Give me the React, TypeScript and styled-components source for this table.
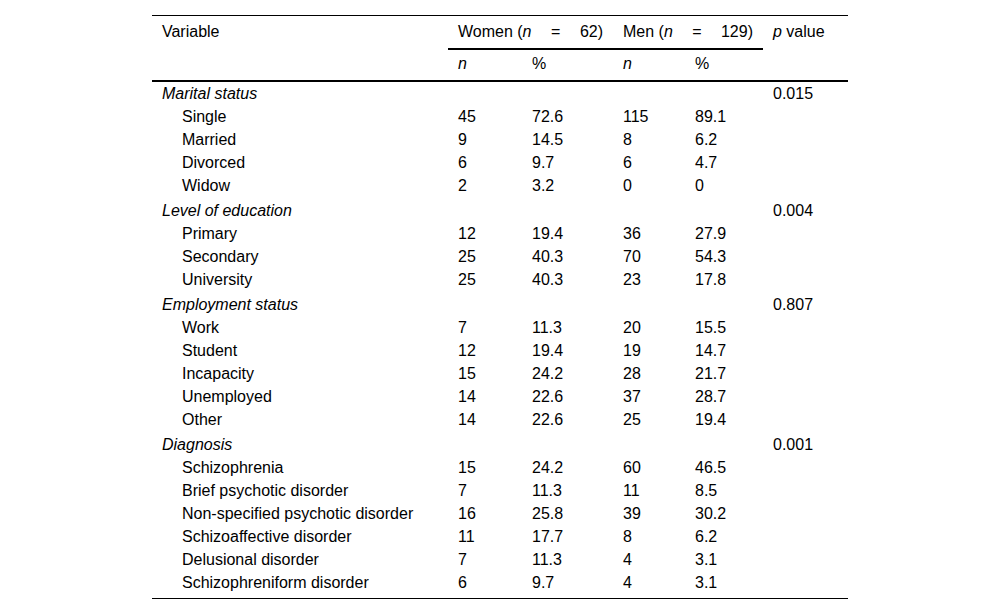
import React from "react";
import styled, { createGlobalStyle } from "styled-components";

const Global = createGlobalStyle`
  html, body { margin: 0; padding: 0; background: #fff; }
  body { font-family: "Liberation Sans", Arial, sans-serif; color: #000; }
`;

const Page = styled.div`
  width: 1000px;
  padding-top: 15px;
  display: flex;
  justify-content: center;
`;

const Table = styled.table`
  width: 696px;
  border-collapse: collapse;
  table-layout: fixed;
  font-size: 16px;
  line-height: 17px;
  border-top: 1px solid #000;
  border-bottom: 1px solid #000;
`;

const HeadCell = styled.th<{ $row2?: boolean; $underline?: boolean }>`
  text-align: left;
  font-weight: normal;
  vertical-align: top;
  white-space: nowrap;
  padding: ${(p) => (p.$row2 ? "5px 10px 8px 10px" : "7px 10px 8px 10px")};
  border-bottom: ${(p) => (p.$underline ? "2px solid #000" : "none")};
`;

const HeadRow = styled.tr<{ $last?: boolean }>`
  border-bottom: ${(p) => (p.$last ? "2px solid #000" : "none")};
`;

const Equation = styled.span`
  display: flex;
  justify-content: space-between;
`;

const Ital = styled.i`
  font-style: italic;
`;

const Cell = styled.td<{ $indent?: boolean; $spaced?: boolean; $italic?: boolean; $last?: boolean }>`
  padding: ${(p) =>
    `${p.$spaced ? 5 : 3}px 10px ${p.$last ? 7 : 3}px ${p.$indent ? 30 : 10}px`};
  font-style: ${(p) => (p.$italic ? "italic" : "normal")};
  vertical-align: top;
  white-space: nowrap;
`;

type Item = { label: string; wn: string; wp: string; mn: string; mp: string };
type Section = { title: string; p: string; items: Item[] };

const it = (label: string, wn: string, wp: string, mn: string, mp: string): Item => ({
  label,
  wn,
  wp,
  mn,
  mp,
});

const sections: Section[] = [
  {
    title: "Marital status",
    p: "0.015",
    items: [
      it("Single", "45", "72.6", "115", "89.1"),
      it("Married", "9", "14.5", "8", "6.2"),
      it("Divorced", "6", "9.7", "6", "4.7"),
      it("Widow", "2", "3.2", "0", "0"),
    ],
  },
  {
    title: "Level of education",
    p: "0.004",
    items: [
      it("Primary", "12", "19.4", "36", "27.9"),
      it("Secondary", "25", "40.3", "70", "54.3"),
      it("University", "25", "40.3", "23", "17.8"),
    ],
  },
  {
    title: "Employment status",
    p: "0.807",
    items: [
      it("Work", "7", "11.3", "20", "15.5"),
      it("Student", "12", "19.4", "19", "14.7"),
      it("Incapacity", "15", "24.2", "28", "21.7"),
      it("Unemployed", "14", "22.6", "37", "28.7"),
      it("Other", "14", "22.6", "25", "19.4"),
    ],
  },
  {
    title: "Diagnosis",
    p: "0.001",
    items: [
      it("Schizophrenia", "15", "24.2", "60", "46.5"),
      it("Brief psychotic disorder", "7", "11.3", "11", "8.5"),
      it("Non-specified psychotic disorder", "16", "25.8", "39", "30.2"),
      it("Schizoaffective disorder", "11", "17.7", "8", "6.2"),
      it("Delusional disorder", "7", "11.3", "4", "3.1"),
      it("Schizophreniform disorder", "6", "9.7", "4", "3.1"),
    ],
  },
];

export default function App() {
  return (
    <>
      <Global />
      <Page>
        <Table>
          <colgroup>
            <col style={{ width: 296 }} />
            <col style={{ width: 74 }} />
            <col style={{ width: 91 }} />
            <col style={{ width: 72 }} />
            <col style={{ width: 78 }} />
            <col style={{ width: 85 }} />
          </colgroup>
          <thead>
            <HeadRow>
              <HeadCell rowSpan={2}>Variable</HeadCell>
              <HeadCell colSpan={2} $underline>
                <Equation>
                  <span>
                    Women (<Ital>n</Ital>
                  </span>
                  <span>=</span>
                  <span>62)</span>
                </Equation>
              </HeadCell>
              <HeadCell colSpan={2} $underline>
                <Equation>
                  <span>
                    Men (<Ital>n</Ital>
                  </span>
                  <span>=</span>
                  <span>129)</span>
                </Equation>
              </HeadCell>
              <HeadCell rowSpan={2}>
                <Ital>p</Ital> value
              </HeadCell>
            </HeadRow>
            <HeadRow $last>
              <HeadCell $row2>
                <Ital>n</Ital>
              </HeadCell>
              <HeadCell $row2>%</HeadCell>
              <HeadCell $row2>
                <Ital>n</Ital>
              </HeadCell>
              <HeadCell $row2>%</HeadCell>
            </HeadRow>
          </thead>
          <tbody>
            {sections.map((s, si) => {
              const spaced = si !== 0;
              return (
                <React.Fragment key={s.title}>
                  <tr>
                    <Cell $italic $spaced={spaced}>
                      {s.title}
                    </Cell>
                    <Cell $spaced={spaced} />
                    <Cell $spaced={spaced} />
                    <Cell $spaced={spaced} />
                    <Cell $spaced={spaced} />
                    <Cell $spaced={spaced}>{s.p}</Cell>
                  </tr>
                  {s.items.map((row, ri) => {
                    const last = si === sections.length - 1 && ri === s.items.length - 1;
                    return (
                      <tr key={row.label}>
                        <Cell $indent $last={last}>
                          {row.label}
                        </Cell>
                        <Cell $last={last}>{row.wn}</Cell>
                        <Cell $last={last}>{row.wp}</Cell>
                        <Cell $last={last}>{row.mn}</Cell>
                        <Cell $last={last}>{row.mp}</Cell>
                        <Cell $last={last} />
                      </tr>
                    );
                  })}
                </React.Fragment>
              );
            })}
          </tbody>
        </Table>
      </Page>
    </>
  );
}
